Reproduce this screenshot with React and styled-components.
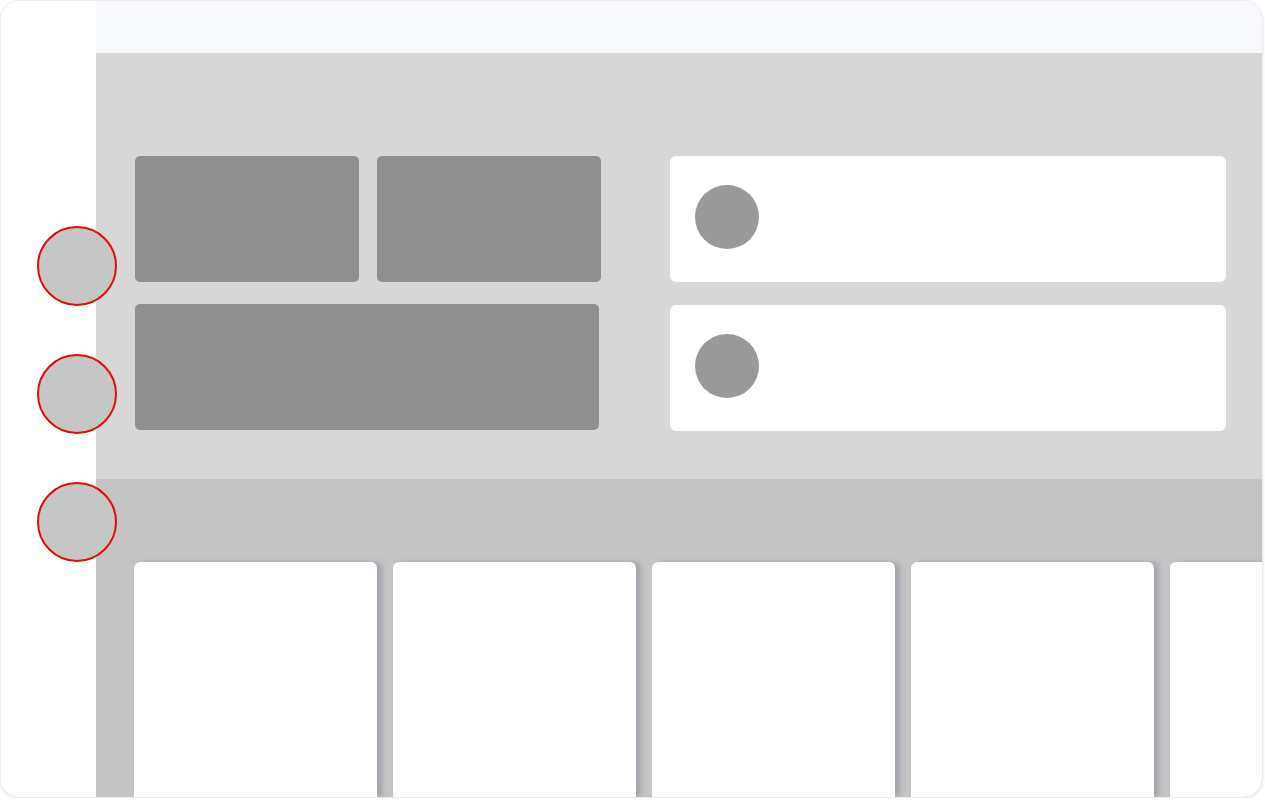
import styled, { createGlobalStyle } from "styled-components";

const GlobalStyle = createGlobalStyle`
  html, body {
    margin: 0;
    padding: 0;
    background: #ffffff;
    font-family: "Liberation Sans", Arial, sans-serif;
  }
`;

const Frame = styled.div`
  position: relative;
  display: flex;
  width: 1263px;
  height: 798px;
  box-sizing: border-box;
  border: 1px solid #ececec;
  border-radius: 20px;
  overflow: hidden;
  background: #ffffff;
  box-shadow: 0 1px 3px rgba(0, 0, 0, 0.1);
`;

const Sidebar = styled.div`
  width: 95px;
  flex-shrink: 0;
  background: #ffffff;
`;

const Main = styled.div`
  flex: 1;
  display: flex;
  flex-direction: column;
  min-width: 0;
`;

const TopBar = styled.div`
  height: 52px;
  flex-shrink: 0;
  background: #f8f9fd;
`;

const Hero = styled.div`
  height: 426px;
  flex-shrink: 0;
  box-sizing: border-box;
  padding: 103px 36px 0 39px;
  background: #d7d7d7;
  display: flex;
  gap: 69px;
`;

const BlockGrid = styled.div`
  display: grid;
  grid-template-columns: 224px 224px;
  grid-template-rows: 126px 126px;
  column-gap: 18px;
  row-gap: 22px;
`;

const Block = styled.div`
  background: #8f8f8f;
  border-radius: 5px;
  grid-column: ${(p) => (p.$wide ? "1 / span 2" : "auto")};
  margin-right: ${(p) => (p.$wide ? "2px" : "0")};
`;

const CardColumn = styled.div`
  flex: 1;
  display: flex;
  flex-direction: column;
  gap: 23px;
`;

const InfoCard = styled.div`
  height: 126px;
  background: #ffffff;
  border-radius: 6px;
  display: flex;
  align-items: center;
  padding-left: 25px;
`;

const Avatar = styled.div`
  width: 64px;
  height: 64px;
  border-radius: 50%;
  background: #999999;
  margin-top: -4px;
`;

const Lower = styled.div`
  flex: 1;
  background: #c4c4c4;
  box-sizing: border-box;
  padding: 83px 0 0 38px;
  display: flex;
  gap: 16px;
  overflow: hidden;
`;

const Tile = styled.div`
  width: 243px;
  flex-shrink: 0;
  background: #ffffff;
  border-radius: 6px 6px 0 0;
  box-shadow: 5px 0 5px rgba(120, 128, 145, 0.45);
`;

const Markers = styled.div`
  position: absolute;
  left: 36px;
  top: 225px;
  display: flex;
  flex-direction: column;
  gap: 48px;
`;

const Marker = styled.div`
  width: 80px;
  height: 80px;
  box-sizing: border-box;
  border-radius: 50%;
  border: 2.5px solid #e00b0b;
  background: #c6c6c6;
`;

const App = () => {
  return (
    <>
      <GlobalStyle />
      <Frame>
        <Sidebar />
        <Main>
          <TopBar />
          <Hero>
            <BlockGrid>
              <Block />
              <Block />
              <Block $wide />
            </BlockGrid>
            <CardColumn>
              <InfoCard>
                <Avatar />
              </InfoCard>
              <InfoCard>
                <Avatar />
              </InfoCard>
            </CardColumn>
          </Hero>
          <Lower>
            {[0, 1, 2, 3, 4].map((i) => (
              <Tile key={i} />
            ))}
          </Lower>
        </Main>
        <Markers>
          <Marker />
          <Marker />
          <Marker />
        </Markers>
      </Frame>
    </>
  );
};

export default App;
